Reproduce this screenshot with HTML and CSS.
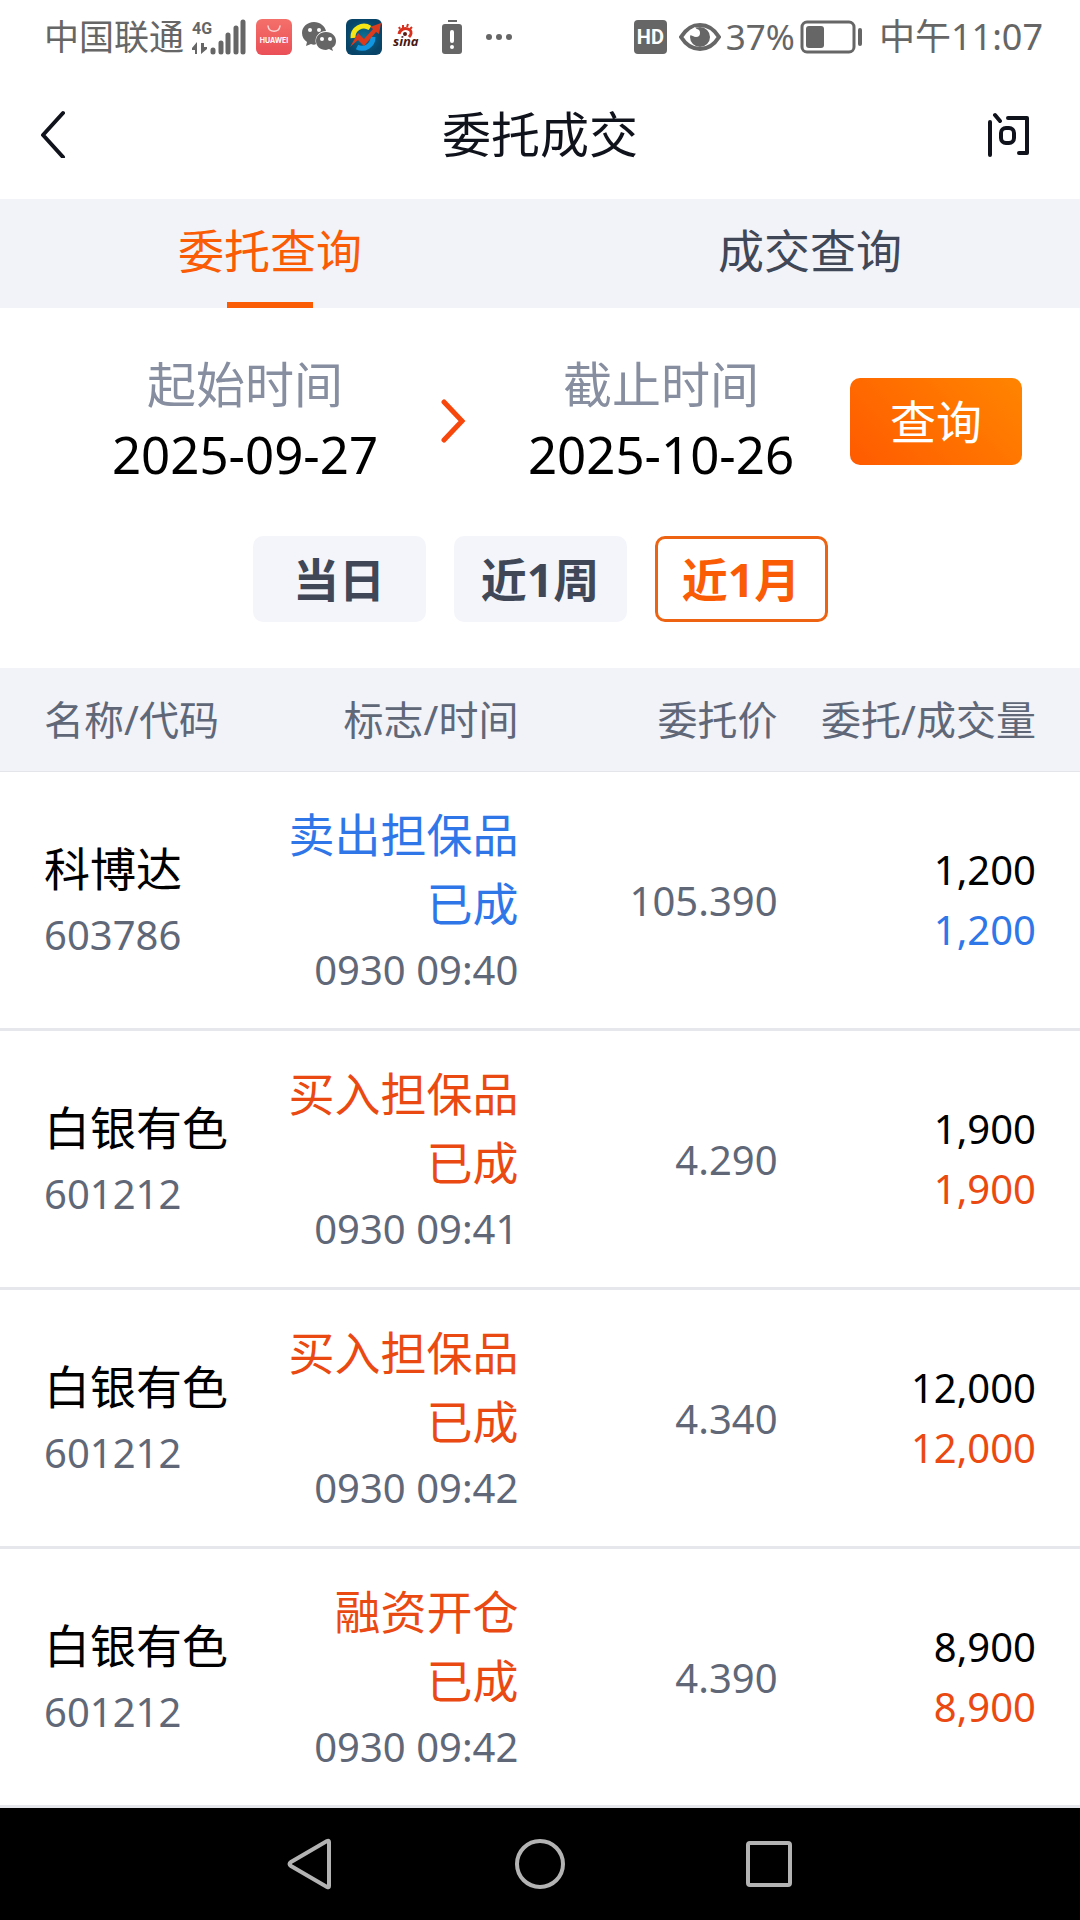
FILE: index.html
```html
<!DOCTYPE html>
<html lang="zh-CN">
<head>
<meta charset="utf-8">
<meta name="viewport" content="width=device-width, initial-scale=1">
<title>委托成交</title>
<link rel="stylesheet" href="styles.css">
</head>
<body>
<div class="screen">
  <div class="status-bar">
    <div class="status-left">
      <span class="carrier">中国联通</span>
      <svg class="signal" width="54" height="40" viewBox="0 -2 54 40" aria-hidden="true">
        <text class="network" x="0" y="15">4G</text>
        <path d="M5 35V23L0 29V31H3V35ZM9 24V35L15 30V28H12V24Z" fill="#666"/>
        <path d="M21 31V33M29 24V33M36 16V33M44 9V33M51 3V33" stroke="#666" stroke-width="5" stroke-linecap="round"/>
      </svg>
      <svg class="app-icon" width="36" height="36" viewBox="0 0 36 36" aria-hidden="true">
        <defs><linearGradient id="store" x1="0" y1="0" x2="0" y2="1"><stop offset="0" stop-color="#f4706a"/><stop offset="1" stop-color="#ea4f57"/></linearGradient></defs>
        <rect width="36" height="36" rx="6" fill="url(#store)"/>
        <path d="M12 7C13 14 23 14 24 7" fill="none" stroke="#fbd5d3" stroke-width="1.5" stroke-linecap="round"/>
        <text class="store-name" x="18" y="24" text-anchor="middle">HUAWEI</text>
      </svg>
      <svg class="app-icon" width="34" height="36" viewBox="0 0 34 36" aria-hidden="true">
        <path d="M12 3C5 3 0 8 0 14C0 18 2 21 5 23L4 27L9 25C11 26 13 26 14 25C12 18 17 12 24 12C23 7 18 3 12 3Z" fill="#666"/>
        <path d="M24 13C18 13 14 17 14 22C14 27 18 31 24 31L27 30L31 32L30 29C33 27 34 25 34 22C34 17 30 13 24 13Z" fill="#666"/>
        <g fill="#fff"><circle cx="8" cy="11" r="2"/><circle cx="17" cy="11" r="2"/><circle cx="20" cy="20" r="2"/><circle cx="28" cy="20" r="2"/></g>
      </svg>
      <svg class="app-icon" width="36" height="36" viewBox="0 0 36 36" aria-hidden="true">
        <defs><radialGradient id="chart"><stop offset="0" stop-color="#0d7096"/><stop offset="1" stop-color="#074468"/></radialGradient></defs>
        <rect width="36" height="36" rx="6" fill="url(#chart)"/>
        <path d="M7 19A11 11 0 0 1 24 9" fill="none" stroke="#f5e616" stroke-width="5"/>
        <path d="M27 18A11 11 0 0 1 11 28" fill="none" stroke="#1296e0" stroke-width="5"/>
        <path d="M4 28L12 14L18 20L27 10L24 8L35 4L33 15L30 13L18 27L12 21Z" fill="#dc3a1d"/>
      </svg>
      <svg class="app-icon sina" width="34" height="36" viewBox="0 0 34 36" aria-hidden="true">
        <path d="M7 15C8 10 13 8 18 11C20 13 19 16 17 18" fill="none" stroke="#d8301c" stroke-width="3"/>
        <path d="M8 10L7 8M11 9L11 6M15 8L16 5M18 10L20 8" stroke="#d8301c" stroke-width="2"/>
        <circle cx="13" cy="15" r="2" fill="#5a1a12"/>
        <text class="sina-name" x="1" y="27">sina</text>
      </svg>
      <svg class="battery-alert" width="20" height="36" viewBox="0 0 20 36" aria-hidden="true">
        <path d="M6 2H15" stroke="#666" stroke-width="2"/>
        <rect y="5" width="20" height="30" rx="3" fill="#666"/>
        <path d="M10 13V22" stroke="#fff" stroke-width="4" stroke-linecap="round"/><circle cx="10" cy="28" r="2" fill="#fff"/>
      </svg>
      <svg class="more" width="26" height="6" viewBox="0 0 26 6" fill="#666" aria-hidden="true"><circle cx="3" cy="3" r="3"/><circle cx="13" cy="3" r="3"/><circle cx="23" cy="3" r="3"/></svg>
    </div>
    <div class="status-right">
      <span class="hd">HD</span>
      <svg class="eye" width="42" height="28" viewBox="0 0 42 28" aria-hidden="true">
        <path d="M2 14C12-2 30-2 40 14C30 30 12 30 2 14Z" fill="none" stroke="#666" stroke-width="4"/>
        <circle cx="21" cy="14" r="10" fill="#666"/><circle cx="17" cy="10" r="4" fill="#fff"/><path d="M11 7L16 4L20 9L14 13L11 12Z" fill="#fff"/>
      </svg>
      <span class="percent">37%</span>
      <svg class="battery" width="64" height="34" viewBox="0 0 64 34" aria-hidden="true">
        <rect x="2" y="2" width="52" height="30" rx="5" fill="none" stroke="#666" stroke-width="3"/>
        <rect x="6" y="6" width="18" height="22" rx="3" fill="#666"/>
        <path d="M60 10V24" stroke="#666" stroke-width="4" stroke-linecap="round"/>
      </svg>
      <span class="clock">中午11:07</span>
    </div>
  </div>

  <header class="title-bar">
    <button class="icon-button" type="button" aria-label="返回">
      <svg width="26" height="48" viewBox="0 0 26 48"><path d="M23 3L3 25L23 47" fill="none" stroke="#10131c" stroke-width="4" stroke-linecap="round" stroke-linejoin="round"/></svg>
    </button>
    <h1 class="title">委托成交</h1>
    <button class="icon-button ask" type="button" aria-label="问">
      <svg width="44" height="48" viewBox="0 0 44 48" fill="none" stroke="#10131c" stroke-width="4" stroke-linecap="round" stroke-linejoin="round"><path d="M4 12V45M9 5L14 11M22 8H41V43H33"/><rect x="15" y="18" width="13" height="15" rx="5"/></svg>
    </button>
  </header>

  <nav class="tabs" role="tablist">
    <button class="tab active" type="button" role="tab" aria-selected="true">委托查询</button>
    <button class="tab" type="button" role="tab" aria-selected="false">成交查询</button>
  </nav>

  <form class="filter">
    <div class="dates">
      <div class="date-field">
        <label for="start">起始时间</label>
        <input id="start" type="text" value="2025-09-27" readonly>
      </div>
      <svg class="arrow" width="26" height="44" viewBox="0 0 26 44" aria-hidden="true"><path d="M4 3L22 22L4 41" fill="none" stroke="#f8470c" stroke-width="5" stroke-linecap="round"/></svg>
      <div class="date-field">
        <label for="end">截止时间</label>
        <input id="end" type="text" value="2025-10-26" readonly>
      </div>
      <button class="submit" type="button">查询</button>
    </div>
    <div class="ranges">
      <button class="range" type="button">当日</button>
      <button class="range" type="button">近1周</button>
      <button class="range selected" type="button">近1月</button>
    </div>
  </form>

  <table class="orders">
    <colgroup><col class="col-name"><col class="col-flag"><col class="col-price"><col class="col-volume"></colgroup>
    <thead>
      <tr><th scope="col">名称/代码</th><th scope="col">标志/时间</th><th scope="col">委托价</th><th scope="col">委托/成交量</th></tr>
    </thead>
    <tbody>
      <tr class="sell">
        <td><div class="name">科博达</div><div class="code">603786</div></td>
        <td><div class="flag">卖出担保品</div><div class="flag">已成</div><div class="code">0930 09:40</div></td>
        <td>105.390</td>
        <td><div class="ordered">1,200</div><div class="filled">1,200</div></td>
      </tr>
      <tr class="buy">
        <td><div class="name">白银有色</div><div class="code">601212</div></td>
        <td><div class="flag">买入担保品</div><div class="flag">已成</div><div class="code">0930 09:41</div></td>
        <td>4.290</td>
        <td><div class="ordered">1,900</div><div class="filled">1,900</div></td>
      </tr>
      <tr class="buy">
        <td><div class="name">白银有色</div><div class="code">601212</div></td>
        <td><div class="flag">买入担保品</div><div class="flag">已成</div><div class="code">0930 09:42</div></td>
        <td>4.340</td>
        <td><div class="ordered">12,000</div><div class="filled">12,000</div></td>
      </tr>
      <tr class="buy">
        <td><div class="name">白银有色</div><div class="code">601212</div></td>
        <td><div class="flag">融资开仓</div><div class="flag">已成</div><div class="code">0930 09:42</div></td>
        <td>4.390</td>
        <td><div class="ordered">8,900</div><div class="filled">8,900</div></td>
      </tr>
    </tbody>
  </table>

  <nav class="system-nav" aria-label="系统导航">
    <button type="button" aria-label="返回"><svg width="50" height="52" viewBox="0 0 50 52"><path d="M44 4V48Q44 50 42 49L6 28Q3 26 6 24L42 3Q44 2 44 4Z"/></svg></button>
    <button type="button" aria-label="主页"><svg width="50" height="52" viewBox="0 0 50 52"><circle cx="25" cy="26" r="23"/></svg></button>
    <button type="button" aria-label="最近任务"><svg width="50" height="52" viewBox="0 0 50 52"><rect x="3" y="5" width="42" height="42" rx="2"/></svg></button>
  </nav>
</div>
</body>
</html>
```
FILE: styles.css
```css
* { box-sizing: border-box; }

body {
  margin: 0;
  background: #fff;
  color: #000;
  font-family: "Noto Sans", "Noto Sans CJK SC", sans-serif;
  font-size: 40px;
}

button, input { font: inherit; color: inherit; border: 0; padding: 0; margin: 0; background: none; }
svg { display: block; flex: none; }

.screen { min-height: 100vh; display: flex; flex-direction: column; }

.status-bar {
  display: flex;
  justify-content: space-between;
  align-items: center;
  height: 74px;
  padding: 0 37px 0 44px;
  color: #666;
  font-size: 35px;
  line-height: 48px;
  white-space: nowrap;
}
.status-left, .status-right { display: flex; align-items: center; }
.signal { margin: 0 10px 0 8px; }
.network { font: 700 16px Roboto, sans-serif; fill: #666; }
.app-icon { margin-right: 10px; }
.store-name { font: 700 7px Inter, sans-serif; fill: #fff; }
.sina { margin-right: 16px; }
.sina-name { font: italic 700 13px "Open Sans", sans-serif; fill: #4a1610; }
.battery-alert { margin-right: 24px; }
.hd {
  width: 33px;
  height: 34px;
  margin-right: 12px;
  border-radius: 4px;
  background: #666;
  color: #fff;
  font: 700 20px/34px Roboto, sans-serif;
  text-align: center;
}
.eye { margin-right: 5px; }
.battery { margin: 0 15px 0 5px; }
.clock { font-size: 36px; }

.title-bar {
  display: grid;
  grid-template-columns: 1fr auto 1fr;
  align-items: center;
  height: 125px;
  padding: 0 50px 5px 40px;
}
.icon-button { display: flex; justify-self: start; }
.icon-button.ask { justify-self: end; }
.title { margin: 0 -5px 0 5px; font-size: 49px; font-weight: 400; line-height: 64px; color: #10131c; }

.tabs { display: grid; grid-template-columns: 1fr 1fr; background: #f2f3f8; }
.tab {
  display: flex;
  flex-direction: column;
  align-items: center;
  height: 109px;
  padding-top: 19px;
  font-size: 46px;
  line-height: 64px;
  color: #404757;
}
.tab.active { color: #fa5b05; }
.tab.active::after { content: ""; width: 86px; height: 6px; margin-top: auto; background: #fa5b05; }

.filter { padding: 44px 58px 46px; }
.dates { display: flex; align-items: center; padding-left: 44px; }
.arrow { margin: 0 52px; }
.date-field { display: flex; flex-direction: column; align-items: center; width: 286px; gap: 2px; }
.date-field label { font-size: 49px; line-height: 64px; color: #868ea0; }
.date-field input { width: 100%; height: 72px; font-size: 51px; line-height: 72px; text-align: center; }
.submit {
  width: 172px;
  height: 87px;
  margin-left: auto;
  padding-bottom: 4px;
  border-radius: 10px;
  background: linear-gradient(45deg, #ff5a00, #ff8500);
  color: #fff;
  font-size: 46px;
}
.ranges { display: flex; justify-content: center; gap: 28px; margin-top: 46px; }
.range {
  width: 173px;
  height: 86px;
  padding-bottom: 4px;
  border-radius: 10px;
  background: #f4f5fa;
  color: #404757;
  font-size: 46px;
  font-weight: 700;
}
.range.selected { border: 3px solid #ee6312; background: #fff; color: #fa5b05; }

.orders { width: 100%; table-layout: fixed; border-collapse: separate; border-spacing: 0; }
.col-name { width: 25%; }
.col-flag { width: 23%; }
.col-price { width: 24%; }
.col-volume { width: 28%; }
.orders th, .orders td { padding: 0; text-align: right; white-space: nowrap; }
.orders th:first-child, .orders td:first-child { padding-left: 44px; text-align: left; }
.orders th:last-child, .orders td:last-child { padding-right: 44px; }
.orders th {
  height: 104px;
  padding-bottom: 4px;
  border-bottom: 1px solid #e4e5eb;
  background: #f2f3f8;
  color: #606878;
  font-weight: 400;
}
.orders td { height: 259px; border-bottom: 3px solid #e6e7ec; color: #606878; }
.name, .flag { font-size: 46px; line-height: 69px; }
.name, .ordered { color: #000; }
.code { line-height: 63px; }
.ordered, .filled { line-height: 60px; }
.sell .flag, .sell .filled { color: #2f77e8; }
.buy .flag, .buy .filled { color: #ea4a12; }

.system-nav {
  display: flex;
  flex: 1;
  justify-content: center;
  align-items: center;
  gap: 180px;
  min-height: 112px;
  background: #000;
}
.system-nav svg { fill: none; stroke: #b3b3b3; stroke-width: 4; }
```
